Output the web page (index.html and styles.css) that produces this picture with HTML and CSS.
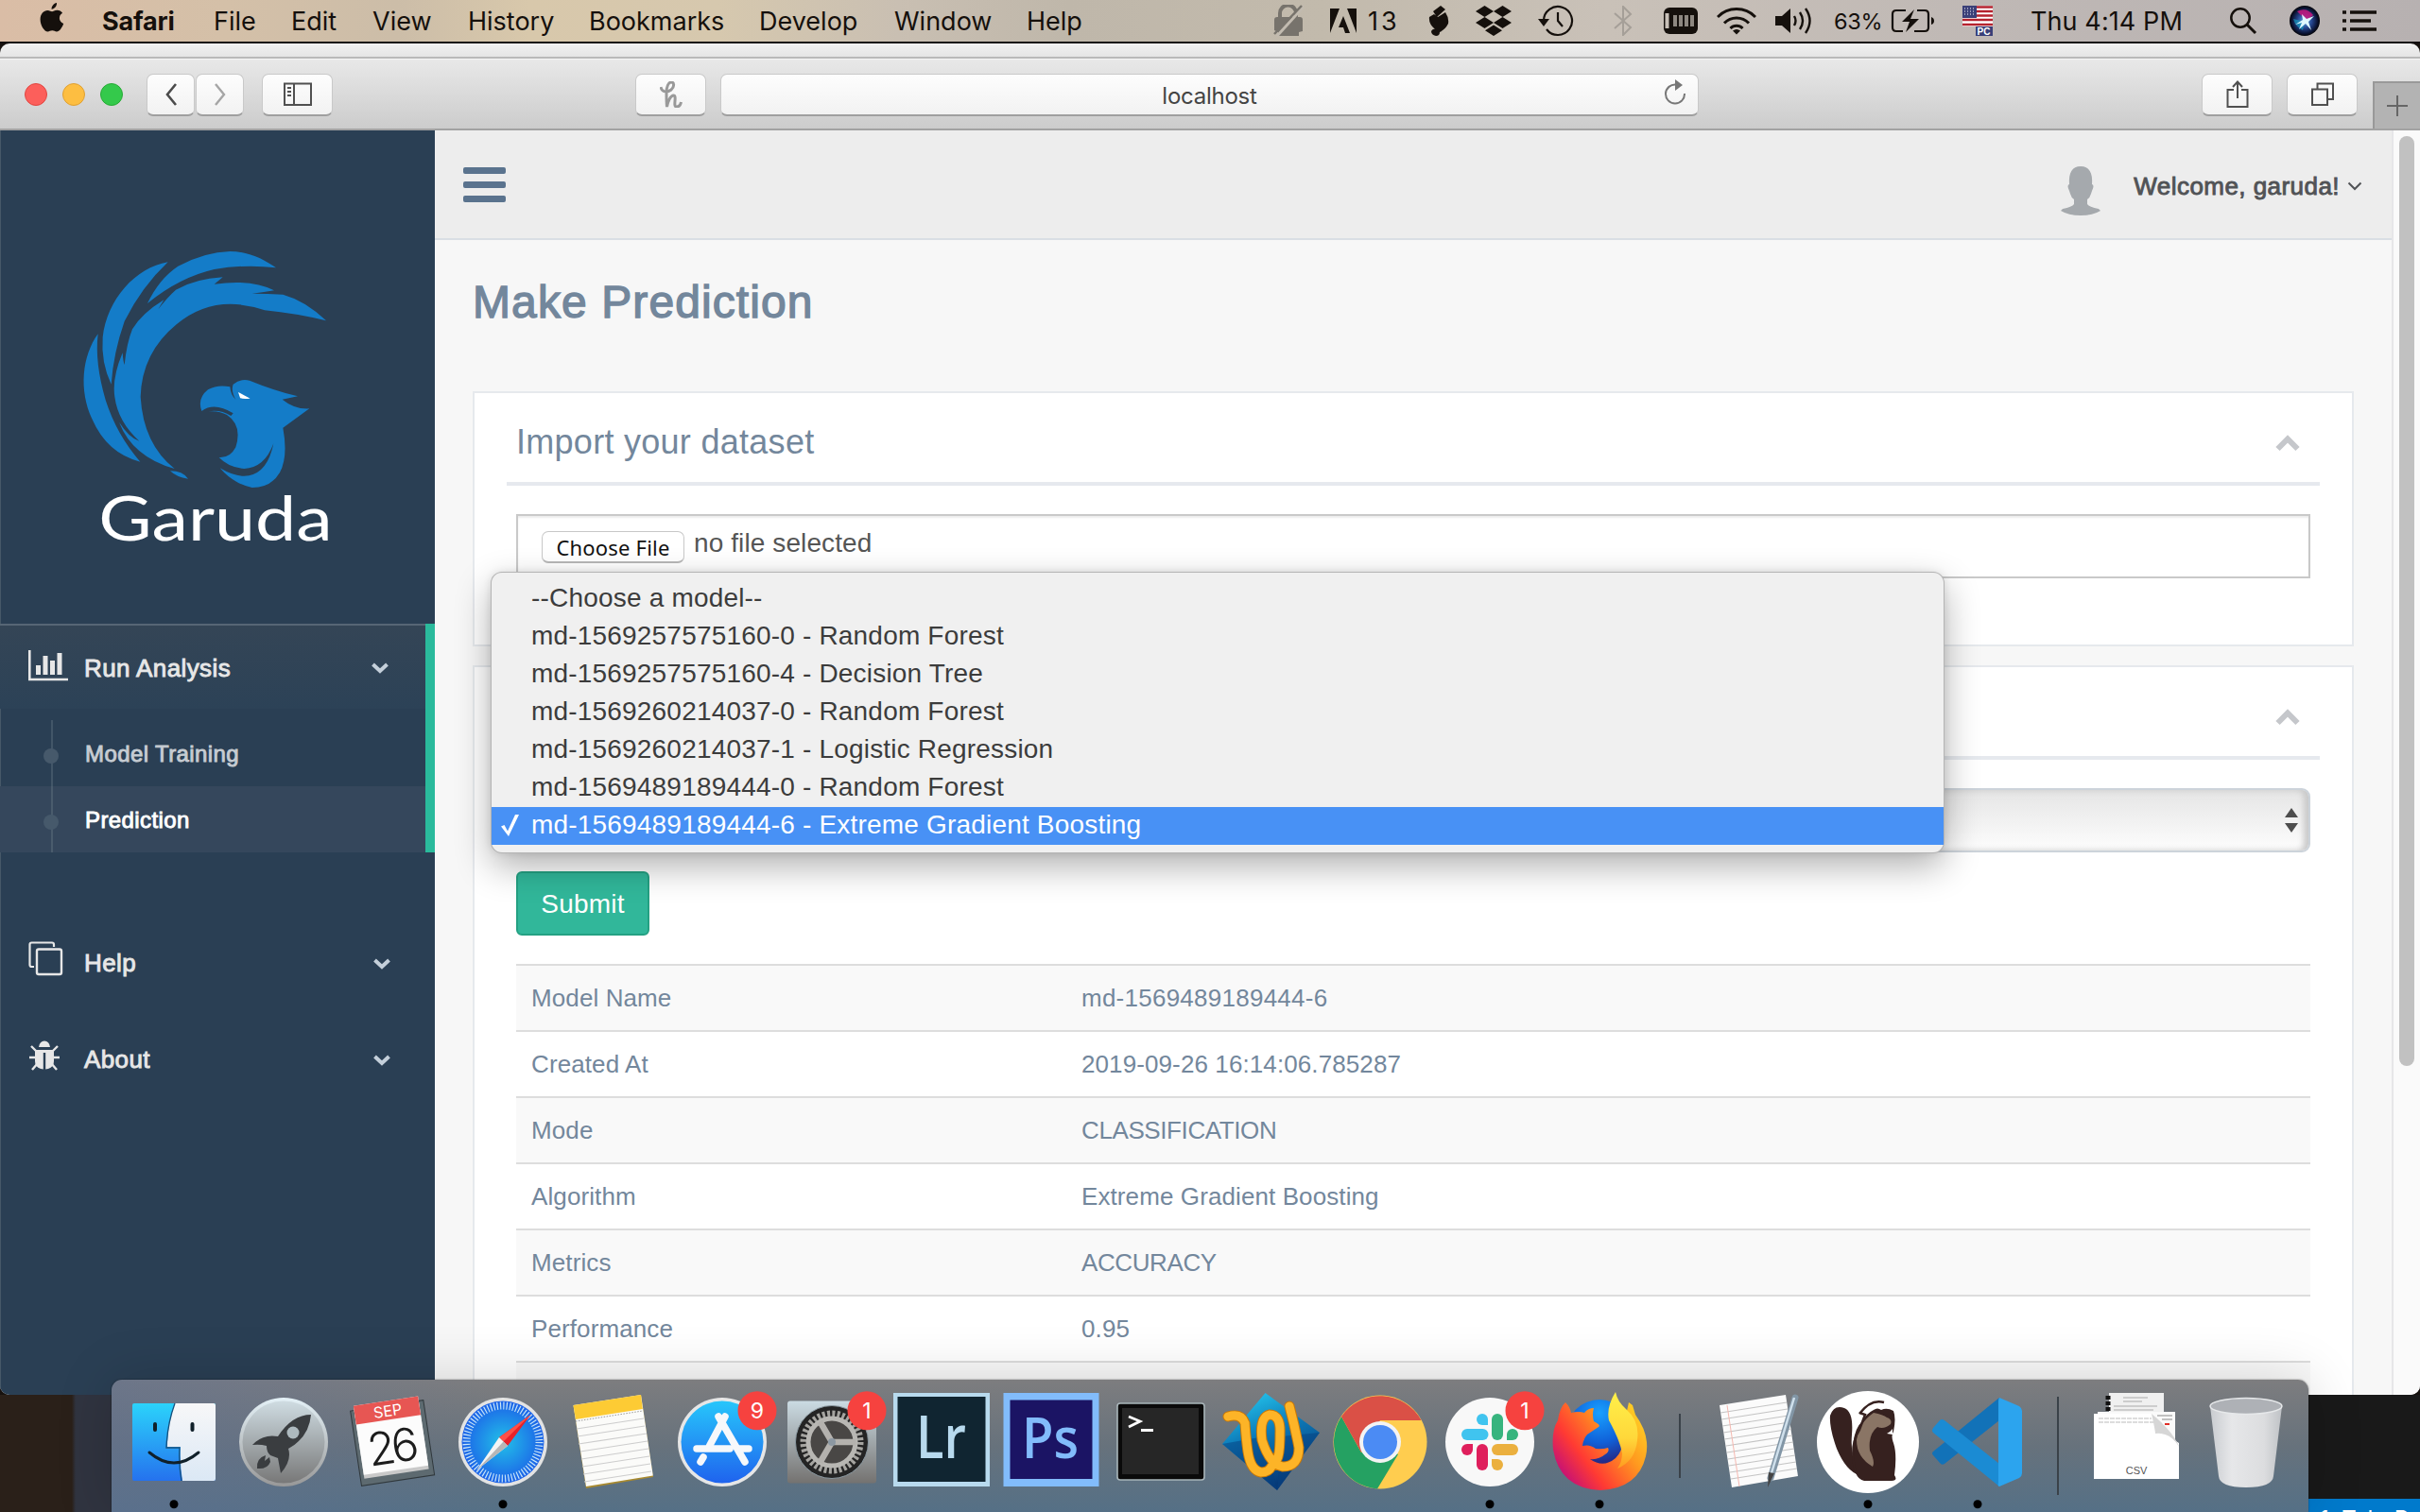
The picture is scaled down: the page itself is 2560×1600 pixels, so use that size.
FILE: index.html
```
<!DOCTYPE html>
<html lang="en">
<head>
<meta charset="utf-8">
<title>Garuda - Make Prediction</title>
<link rel="stylesheet" href="styles.css">
</head>
<body>
<div class="desktop">
<header class="menubar">
  <nav class="app-menu">
    <svg class="apple" viewBox="0 0 26 32"><path d="M18 0c.4 3-2.200 6.600-5.400 6.800C12.200 3.800 15 .5 18 0zM13 9.200c1.200 0 2.900-1.500 5.500-1.500 2.300 0 4.300 1.100 5.600 3-4.700 2.700-4 9.300 1.100 11.300-1.600 4.400-4.400 8.500-7.200 8.500-1.900 0-2.500-1.200-4.700-1.200-2.300 0-3 1.200-4.800 1.200C5 30.500.6 24 .6 17.500c0-6 3.800-9.600 7.700-9.600 2.300 0 3.700 1.300 4.700 1.300z"/></svg>
    <b>Safari</b><span>File</span><span>Edit</span><span>View</span><span>History</span><span>Bookmarks</span><span>Develop</span><span>Window</span><span>Help</span>
  </nav>
  <div class="status">
    <svg class="st-lock" viewBox="0 0 32 34"><path d="M7 15V9a8.500 8.500 0 0 1 17 0v6" fill="none" stroke="#77736c" stroke-width="4"/><path d="M1 16q0-3 3-3h24q3 0 3 3v12l-4 1v4H5v-4l-4-2z" fill="#77736c"/><path d="M4 33L33 1" stroke="#c2bbb0" stroke-width="3"/><path d="M1 31L30 1" stroke="#77736c" stroke-width="2.500"/></svg>
    <svg class="st-a" viewBox="0 0 28 26"><path d="M0 0h10L0 26zM18 0h10v26zM14 8l7 18h-5l-2-6H9z"/></svg>
    <span class="st-13">13</span>
    <svg class="st-s" viewBox="0 0 22 32"><path d="M5 6l8-6 5 4-9 8zM1 12l5-3 4 3 8-5q4 6 3 12-3 6-9 9 0 4-4 4-5-1-5-5 2-3 4-2Q0 19 1 12z"/></svg>
    <svg class="st-db" viewBox="0 0 38 32"><path d="M9.500 0L19 6l-9.500 6L0 6zM28.500 0L38 6l-9.500 6L19 6zM9.500 12L19 18l-9.500 6L0 18zM28.500 12L38 18l-9.500 6L19 18zM19 20.500l9 5.700-9 5.800-9-5.800z"/></svg>
    <svg class="st-tm" viewBox="0 0 38 34"><path d="M6 17A15 15 0 1 1 9 26M21 8v9l5 6" fill="none" stroke="#15100c" stroke-width="2.200"/><path d="M0 15h12l-6 8z"/></svg>
    <svg class="st-bt" viewBox="0 0 20 32"><path d="M1 8l17 15-8 8V1l8 8L1 24" fill="none" stroke="#a59f98" stroke-width="2"/></svg>
    <svg class="st-mem" viewBox="0 0 36 28"><rect width="36" height="28" rx="6"/><path d="M3.500 6v16" stroke="#c8c0b8" stroke-width="4"/><path d="M12 8v12M18 8v12M24 8v12M30 8v12" stroke="#8d8780" stroke-width="4"/></svg>
    <svg class="st-wifi" viewBox="0 0 42 30"><path d="M1 11a28 28 0 0 1 40 0M8 17.500a18 18 0 0 1 26 0M14.500 23a9 9 0 0 1 13 0" fill="none" stroke="#15100c" stroke-width="3"/><path d="M17 25.500q4-3 8 0l-4 4z"/></svg>
    <svg class="st-vol" viewBox="0 0 42 32"><path d="M0 11h7l9-8v26l-9-8H0z"/><path d="M20 11q3 5 0 10M26 7q6 9 0 18M32 3q9 13 0 26" fill="none" stroke="#15100c" stroke-width="2.400"/></svg>
    <span class="st-pct">63%</span>
    <svg class="st-batt" viewBox="0 0 46 26"><path d="M16 2H6Q2 2 2 6v14q0 4 4 4h7M28 2h8q4 0 4 4v14q0 4-4 4H25" fill="none" stroke="#15100c" stroke-width="2.200"/><path d="M43 9q3 1 3 4t-3 4zM25 1L12 14h8l-4 11 14-14h-9z"/></svg>
    <svg class="st-flag" viewBox="0 0 32 32"><path fill="#fff" d="M0 0h32v22H0z"/><path d="M0 1.500h32M0 6h32M0 10.500h32M0 15h32M0 20h32" stroke="#b5232f" stroke-width="2.400"/><path fill="#3a3f78" d="M0 0h15v13H0zM14 22h18v10H14z"/><path d="M2 3h12M2 6h12M2 9h12" stroke="#fff" stroke-dasharray="1 2"/><text x="15.500" y="31" font-size="10" font-weight="700" fill="#fff" font-family="Liberation Sans, sans-serif">PC</text></svg>
    <span class="st-time">Thu 4:14 PM</span>
    <svg class="st-search" viewBox="0 0 30 30"><circle cx="12" cy="12" r="9.700" fill="none" stroke="#15100c" stroke-width="2.500"/><path d="M19 19l9 9" stroke="#15100c" stroke-width="3"/></svg>
    <svg class="st-siri" viewBox="0 0 32 32"><defs><radialGradient id="siri"><stop offset="0" stop-color="#5fa8e8"/><stop offset=".5" stop-color="#23428a"/><stop offset=".85" stop-color="#0a1230"/><stop offset="1" stop-color="#050508"/></radialGradient></defs><circle cx="16" cy="16" r="16" fill="url(#siri)"/><path d="M8 6q10-5 17 4l-7 6z" fill="#c8187e" opacity=".85"/><path d="M4 14q2 8 10 12l2-9z" fill="#18a8c8" opacity=".6"/><path d="M6 20l8-5-1-6 5 5 8-3-6 6 3 9-6-7-7 6 3-7z" fill="#dff8ff"/></svg>
    <svg class="st-list" viewBox="0 0 36 22"><path d="M0 2h4M0 11h4M0 20h4M8 2h28M8 11h22M8 20h28" stroke="#15100c" stroke-width="3.600"/></svg>
  </div>
</header>
<div class="back-window"></div>
<main class="window">
  <div class="toolbar">
    <i class="light red"></i><i class="light yellow"></i><i class="light green"></i>
    <span class="tbtn back"><svg viewBox="0 0 14 26" width="14" height="26"><path d="M12 2L3 13l9 11" fill="none" stroke="#4b4b4b" stroke-width="2.600"/></svg></span>
    <span class="tbtn fwd"><svg viewBox="0 0 14 26" width="14" height="26"><path d="M2 2l9 11-9 11" fill="none" stroke="#a5a5a5" stroke-width="2.400"/></svg></span>
    <span class="tbtn side"><svg viewBox="0 0 32 26" width="32" height="26"><path d="M2 1.500h28v22.500H2zM12 1v23M5 6h4M5 10h4M5 14h4" fill="none" stroke="#505050" stroke-width="2"/></svg></span>
    <span class="tbtn honey"><svg viewBox="0 0 24 28" width="24" height="28"><path d="M1 6c1 6 7 6 11 3 4-4 3-8 0-8S7 6 7 12c0 6 0 10 .5 15 1-6 4-12 7-12 4 0-1 12 3 12q4 0 5-5" fill="none" stroke="#999" stroke-width="3"/></svg></span>
    <span class="tbtn url"><span>localhost</span><svg viewBox="0 0 24 28" width="24" height="28"><path d="M13 5.500A10 10 0 1 0 22 15" fill="none" stroke="#777" stroke-width="2"/><path d="M12 0l8 6-8 6z" fill="#777"/></svg></span>
    <span class="tbtn share"><svg viewBox="0 0 24 32" width="24" height="32"><path d="M8 11H1.500v18h21V11H16M12 20V3M7 8l5-5.500L17 8" fill="none" stroke="#505050" stroke-width="2"/></svg></span>
    <span class="tbtn tabs"><svg viewBox="0 0 26 26" width="26" height="26"><path d="M2 7.500h16V24H2zM7.500 7V1.500H24V18h-5" fill="none" stroke="#505050" stroke-width="2"/></svg></span>
    <span class="newtab"><svg viewBox="0 0 22 22" width="22" height="22"><path d="M11 0v22M0 11h22" stroke="#666" stroke-width="2"/></svg></span>
  </div>
  <div class="page">
    <aside class="sidebar">
      <svg class="logo" viewBox="0 0 960 1080">
        <g fill="#147cc8">
          <path d="M696 130C660 105 610 78 550 78Q470 80 385 125Q325 165 288 243Q390 160 500 135Q600 118 696 130z"/>
          <path d="M353 112C250 130 160 230 146 350Q140 430 173 500Q180 400 215 300Q270 190 353 112z"/>
          <path d="M131 340C80 410 70 520 112 610Q160 720 265 746Q190 660 155 550Q120 430 131 340z"/>
          <path d="M855 298Q790 235 718 215Q670 212 620 212Q660 208 690 202Q620 165 500 182L527 160Q440 165 378 200Q350 225 322 262L340 232Q270 275 240 325Q222 370 215 438Q211 430 209 400Q175 480 184 540Q195 620 262 680Q230 670 198 620Q240 730 374 768Q275 690 266 540Q270 400 380 310Q500 210 660 265Q760 275 855 298z"/>
          <path d="M360 775Q400 775 417 800Q380 795 360 775z"/>
          <path fill-rule="evenodd" d="M460 585Q445 545 480 517Q510 500 550 508Q552 535 568 548Q552 520 560 500Q585 480 612 488Q690 520 765 538L716 548Q755 580 802 577L718 638Q735 730 708 780Q680 828 620 828Q560 815 518 766Q570 797 610 790Q670 778 688 688Q660 765 595 768Q545 764 515 732Q550 735 568 700Q590 630 540 597Q515 583 483 586Q520 580 553 600L560 592Q500 555 460 585z"/>
        </g>
        <path d="M576 525L614 545Q590 548 582 543z" fill="#fff"/>
        <text x="133" y="995" textLength="742" lengthAdjust="spacingAndGlyphs" font-family="Lato, sans-serif" font-size="200" fill="#fff">Garuda</text>
      </svg>
      <nav class="side-menu">
        <section class="active">
          <div class="item">
            <svg class="icon" viewBox="0 0 42 34"><path d="M1.300 1v31H42" fill="none" stroke="#e7e7e7" stroke-width="2.600"/><path d="M8 17h5v10H8zM15.500 7h5v20h-5zM23 12h5v15h-5zM30.500 4h5v23h-5z" fill="#e7e7e7"/></svg>
            <span>Run Analysis</span>
            <svg class="chev" viewBox="0 0 18 12"><path d="M1.500 2L9 9l7.500-7" fill="none" stroke="#c4cfda" stroke-width="4"/></svg>
          </div>
          <ul>
            <li>Model Training</li>
            <li class="current">Prediction</li>
          </ul>
        </section>
        <div class="item help">
          <svg class="icon" viewBox="0 0 42 40"><path d="M27 6V3.500Q27 1.500 25 1.500H3.500Q1.500 1.500 1.500 3.500V25q0 2 2 2H6" fill="none" stroke="#e7e7e7" stroke-width="2.200"/><rect x="9" y="8.500" width="26" height="26.500" rx="2" fill="none" stroke="#e7e7e7" stroke-width="2.400"/></svg>
          <span>Help</span>
          <svg class="chev" viewBox="0 0 18 12"><path d="M1.500 2L9 9l7.500-7" fill="none" stroke="#c4cfda" stroke-width="4"/></svg>
        </div>
        <div class="item about">
          <svg class="icon" viewBox="0 0 42 34"><path d="M11 7q1-6.500 6-6.500T23 7zM7 10h20v12q0 6-6 8l-3 .5V14h-2v16.500L13 30q-6-2-6-8z" fill="#e7e7e7"/><path d="M3 6l6 6M31 6l-6 6M1 18h32M4 31l6-7M30 31l-6-7" stroke="#e7e7e7" stroke-width="2.400"/><path d="M17 13v18" stroke="#2a3f54" stroke-width="2.400"/></svg>
          <span>About</span>
          <svg class="chev" viewBox="0 0 18 12"><path d="M1.500 2L9 9l7.500-7" fill="none" stroke="#c4cfda" stroke-width="4"/></svg>
        </div>
      </nav>
    </aside>
    <div class="content">
      <div class="topnav">
        <div class="burger"><i></i><i></i><i></i></div>
        <div class="user">
          <svg class="avatar" viewBox="0 0 42 52" width="42" height="52"><path d="M21 0C12 0 8 7 9 19q-3 1 0 7l1 3q1 4 4 6v5q-2 3-12 5l-2 2q8 5 21 5t21-5l-2-2q-10-2-12-5v-5q3-2 4-6l1-3q3-6 0-7C34 7 30 0 21 0z" fill="#a5a9ad"/></svg>
          <span>Welcome, garuda!</span>
          <svg viewBox="0 0 16 10" width="16" height="10"><path d="M1.500 1.500L8 8l6.500-6.500" fill="none" stroke="#515356" stroke-width="2"/></svg>
        </div>
      </div>
      <div class="body">
        <h1>Make Prediction</h1>
        <section class="panel import">
          <h2>Import your dataset<svg viewBox="0 0 26 18" width="26" height="18"><path d="M2.500 15L13 4.500 23.500 15" fill="none" stroke="#c5c7cb" stroke-width="6"/></svg></h2>
          <div class="file"><button>Choose File</button><span>no file selected</span></div>
        </section>
        <section class="panel model">
          <h2>&nbsp;<svg viewBox="0 0 26 18" width="26" height="18"><path d="M2.500 15L13 4.500 23.500 15" fill="none" stroke="#c5c7cb" stroke-width="6"/></svg></h2>
          <div class="select"><svg viewBox="0 0 14 26" width="14" height="26"><path d="M7 0l7 10H0zM7 26l7-10H0z" fill="#4d4d4d"/></svg></div>
          <button class="submit">Submit</button>
          <table>
            <tr><td>Model Name</td><td class="id">md-1569489189444-6</td></tr>
            <tr><td>Created At</td><td>2019-09-26 16:14:06.785287</td></tr>
            <tr><td>Mode</td><td class="caps">CLASSIFICATION</td></tr>
            <tr><td>Algorithm</td><td>Extreme Gradient Boosting</td></tr>
            <tr><td>Metrics</td><td class="caps">ACCURACY</td></tr>
            <tr><td>Performance</td><td>0.95</td></tr>
            <tr><td></td><td></td></tr>
          </table>
        </section>
      </div>
    </div>
    <div class="scroll"><i></i></div>
  </div>
</main>
<div class="under"><div class="wood"></div><div class="editor"><div class="editor-bar">1&nbsp; Tab&nbsp; Pack</div></div></div>
</div>

<ul class="popup">
  <li>--Choose a model--</li>
  <li>md-1569257575160-0 - Random Forest</li>
  <li>md-1569257575160-4 - Decision Tree</li>
  <li>md-1569260214037-0 - Random Forest</li>
  <li>md-1569260214037-1 - Logistic Regression</li>
  <li>md-1569489189444-0 - Random Forest</li>
  <li class="on"><svg viewBox="0 0 20 24" width="20" height="24"><path d="M0 12.500l3.500-1.500 3.500 6.500L15 0h4L8 23z" fill="#fff"/></svg>md-1569489189444-6 - Extreme Gradient Boosting</li>
</ul>

<svg class="defs" width="0" height="0"><defs>
  <linearGradient id="finder" x2="0" y2="1"><stop offset="0" stop-color="#2bd3fb"/><stop offset="1" stop-color="#2572ee"/></linearGradient>
  <linearGradient id="face" x2="0" y2="1"><stop offset="0" stop-color="#f7f7f8"/><stop offset="1" stop-color="#dbe8f5"/></linearGradient>
  <linearGradient id="launch" x2="0" y2="1"><stop offset="0" stop-color="#cfdce2"/><stop offset="1" stop-color="#787878"/></linearGradient>
  <linearGradient id="ring" x2="0" y2="1"><stop offset="0" stop-color="#e4f1f7"/><stop offset="1" stop-color="#989898"/></linearGradient>
  <radialGradient id="safari"><stop offset="0" stop-color="#22c0e8"/><stop offset="1" stop-color="#1c62e8"/></radialGradient>
  <linearGradient id="store" x2="0" y2="1"><stop offset="0" stop-color="#27c6fb"/><stop offset="1" stop-color="#1f63ee"/></linearGradient>
  <linearGradient id="prefs" x2="0" y2="1"><stop offset="0" stop-color="#cbdbe3"/><stop offset="1" stop-color="#747270"/></linearGradient>
  <linearGradient id="gem" x2=".4" y2="1"><stop offset="0" stop-color="#29d5f8"/><stop offset=".5" stop-color="#0d7ab8"/><stop offset="1" stop-color="#063a78"/></linearGradient>
  <radialGradient id="globe" cx=".5" cy=".2" r=".9"><stop offset="0" stop-color="#18a0ff"/><stop offset=".5" stop-color="#1060d8"/><stop offset="1" stop-color="#301060"/></radialGradient>
  <linearGradient id="fox" x1="1" y1="0" x2="0" y2=".7"><stop offset="0" stop-color="#ffe226"/><stop offset=".4" stop-color="#ff9a1f"/><stop offset=".75" stop-color="#ff3a33"/><stop offset="1" stop-color="#c41078"/></linearGradient>
  <linearGradient id="flame" x2="0" y2="1"><stop offset="0" stop-color="#fff04a"/><stop offset=".6" stop-color="#ffd83a"/><stop offset="1" stop-color="#ff9a1f"/></linearGradient>
  <linearGradient id="trash"><stop offset="0" stop-color="#c9ccd0"/><stop offset=".3" stop-color="#e6e7e9"/><stop offset=".75" stop-color="#dcdddf"/><stop offset="1" stop-color="#bfc2c6"/></linearGradient>
</defs></svg>

<footer class="dock">
  <svg viewBox="0 0 116 140"><rect x="14" y="25" width="88" height="82" rx="2" fill="url(#finder)"/><path d="M59 25q-8 22-8 46h14q-1 18 2 36h33q2 0 2-2V27q0-2-2-2z" fill="url(#face)"/><path d="M59 25q-8 22-9 47h14q-1 18 2 35" fill="none" stroke="#16507c" stroke-width="1.300"/><path d="M38 47v6M77.500 47v6" stroke="#10202a" stroke-width="4" stroke-linecap="round"/><path d="M32 77q26 22 52 0" fill="none" stroke="#10202a" stroke-width="3" stroke-linecap="round"/><circle cx="58" cy="131.700" r="4.500"/></svg>
  <svg viewBox="0 0 116 140"><circle cx="58" cy="66" r="47" fill="url(#ring)"/><circle cx="58" cy="66" r="43.500" fill="url(#launch)"/><path d="M87 37q-20 0-35 23-16-3-27 9 8-1 15 1 0 7 4 10l8 3 3 16q12-14 8-26 22-12 24-36z" fill="#3a3d40"/><circle cx="68" cy="56" r="6.500" fill="#aebabf"/><path d="M39 80q-10 3-9 14 11 1 14-7l-1-5-5 4z" fill="#3a3d40"/></svg>
  <svg viewBox="0 0 116 140"><g transform="rotate(-8.500 57 66)"><rect x="18" y="27" width="78" height="80" fill="#5d6a70" stroke="#30383c"/><path d="M22 26h69v74H22z" fill="#c9c9c9"/><path d="M22 22h69v74H22z" fill="#fcfcfc"/><path d="M22 22h69v20H22z" fill="#e75653"/><text x="57" y="38.500" text-anchor="middle" font-family="Inter, sans-serif" font-size="16" fill="#fff">SEP</text><text x="57" y="88" text-anchor="middle" font-family="Inter, sans-serif" font-weight="300" font-size="48" textLength="54" fill="#1c1c1c">26</text></g></svg>
  <svg viewBox="0 0 116 140"><circle cx="58" cy="66" r="47" fill="#e3e3e3"/><circle cx="58" cy="66" r="43.500" fill="url(#safari)"/><circle cx="58" cy="66" r="38.500" fill="none" stroke="#c8e4f8" stroke-width="8" stroke-dasharray="1.200 2.160"/><path d="M87.500 37L63 70 54 61z" fill="#e8222a"/><path d="M87.500 37L54 61l4.500 4.500z" fill="#ff5048"/><path d="M30 96l24-35 9 9z" fill="#f4f4f4"/><path d="M30 96l28.500-30.500L63 70z" fill="#b6b6b6"/><circle cx="58" cy="131.700" r="4.500"/></svg>
  <svg viewBox="0 0 116 140"><path d="M16.500 28L88 16l13 87-71 12z" fill="#a88a30"/><path d="M16.500 27L88 16l12.800 85.500L30 113z" fill="#fbfbf9"/><path d="M16.500 27L88 16l1.800 15L19 42z" fill="#fdcb34"/><path d="M19 44l71-11" stroke="#999" stroke-dasharray="1.500 1.500"/><path d="M20 52l71-11M21 60l71-11M22 68l72-11M24 76l71-11M25 84l71-11M26 92l71-11M27 100l71-11M28 108l71-11" stroke="#cdcdcd" stroke-width="1.200"/></svg>
  <svg viewBox="0 0 116 140"><circle cx="58" cy="66" r="47" fill="#e6e6e6"/><circle cx="58" cy="66" r="43.500" fill="url(#store)"/><path d="M61 39L44 71M54 39l28 48M31 73h35M76 73h10M38 82l-3 5" stroke="#f6f8fb" stroke-width="7.500" stroke-linecap="round"/><g class="badge"><circle cx="95" cy="32.700" r="20.500"/><text x="95" y="40.500">9</text></g></svg>
  <svg viewBox="0 0 116 140"><rect x="11" y="22.500" width="94" height="87" rx="3" fill="url(#prefs)"/><circle cx="58" cy="66" r="38.500" fill="#242424" stroke="#8a98a0"/><circle cx="58" cy="66" r="30" fill="none" stroke="#a5a4a0" stroke-width="7" stroke-dasharray="3 2.240"/><circle cx="58" cy="66" r="25" fill="#494745" stroke="#b8b7b3" stroke-width="5"/><path d="M58 66h25M58 66L45.500 44.500M58 66L45.500 87.500" stroke="#b4b2ae" stroke-width="6.500"/><circle cx="58" cy="66" r="4" fill="#8c98a2"/><g class="badge"><circle cx="95" cy="32.700" r="20.500"/><text x="95" y="40.500">1</text></g></svg>
  <svg viewBox="0 0 116 140"><path d="M7 14h102v99H7z" fill="#b8daee"/><path d="M11.500 18h93v90h-93z" fill="#102531"/><text x="31" y="83" font-family="Open Sans, sans-serif" font-weight="600" font-size="64" textLength="53" lengthAdjust="spacingAndGlyphs" fill="#b8daee">Lr</text></svg>
  <svg viewBox="0 0 116 140"><path d="M7.500 14h101v99h-101z" fill="#82bcfb"/><path d="M14.500 21.500h87v83.500h-87z" fill="#1b1464"/><text x="27" y="83" font-family="Open Sans, sans-serif" font-weight="600" font-size="60" textLength="60" lengthAdjust="spacingAndGlyphs" fill="#82bcfb">Ps</text></svg>
  <svg viewBox="0 0 116 140"><rect x="12" y="25" width="92" height="81" rx="3" fill="#0a0a0a" stroke="#a9b6ba" stroke-width="1.600"/><path d="M17 30h81v70H17z" fill="#262626"/><path d="M24 39l12 5-12 6M37 53.500h13" fill="none" stroke="#fff" stroke-width="2.800"/></svg>
  <svg viewBox="0 0 116 140"><path d="M52.500 14L110 56 65 117 7 68z" fill="url(#gem)"/><path d="M52 60L7 68l58 49zM70 60l40-4-45 61z" fill="#063f80" opacity=".5"/><g fill="none" stroke-linecap="round"><path d="M13 39q14-4 18 7 1 16 3 30 3 20 14 22 8 0 11-6M78 28q6 22 10 44 0 20-17 20-14-2-22-28-3-24 8-27 12 0 11 20 0 22-3 27" stroke="#c97806" stroke-width="11"/><path d="M13 39q14-4 18 7 1 16 3 30 3 20 14 22 8 0 11-6M78 28q6 22 10 44 0 20-17 20-14-2-22-28-3-24 8-27 12 0 11 20 0 22-3 27" stroke="#fdb427" stroke-width="9"/></g></svg>
  <svg viewBox="0 0 116 140"><circle cx="58" cy="66" r="49.500" fill="#ffcd4f"/><path d="M58 66l19 13-22 36.400A49.500 49.500 0 0 1 17 39l21 38z" fill="#25a162"/><path d="M17 39A49.500 49.500 0 0 1 101.500 43H58L38 77z" fill="#da5046"/><circle cx="58" cy="66" r="22" fill="#f3f3f3"/><circle cx="58" cy="66" r="18" fill="#4b8bf4"/></svg>
  <svg viewBox="0 0 116 140"><circle cx="58" cy="66" r="47" fill="#f8f8f8"/><g stroke-width="12" stroke-linecap="round"><path d="M34 58h16.500" stroke="#40c4ef"/><path d="M66 42v16" stroke="#37b47e"/><path d="M50 74v16" stroke="#df1f5c"/><path d="M66 74h16" stroke="#ebb03f"/></g><path d="M56 48V42a6 6 0 1 0-6 6z" fill="#40c4ef"/><path d="M76 64V58a6 6 0 1 1 6 6z" fill="#37b47e"/><path d="M40 68v6a6 6 0 1 1-6-6z" fill="#df1f5c"/><path d="M60 84h6a6 6 0 1 1-6 6z" fill="#ebb03f"/><g class="badge"><circle cx="95" cy="32.700" r="20.500"/><text x="95" y="40.500">1</text></g><circle cx="58" cy="131.700" r="4.500"/></svg>
  <svg viewBox="0 0 116 140"><circle cx="58" cy="56" r="35" fill="url(#globe)"/><path d="M22 24q5 5 6 11 8-2 14 0 4-5 10-5-2 7 0 14 8 4 5 6l-12 8q-4 4-5 12 8-2 14 3 7 1 13-1 2 4-3 7-7 6-16 5 14 10 27-1 10-9 8-32L89 24l4 3 3 10q16 22 11 44-8 34-48 36Q16 115 9 74q-2-20 5-31 2-14 8-19z" fill="url(#fox)"/><path d="M75 13q-10 16-7 30 12 22 14 35 0 9-5 16 19-8 21-30 3-20-12-33-9-8-11-18z" fill="url(#flame)"/><circle cx="58" cy="131.700" r="4.500"/></svg>
  <i class="sep"></i>
  <svg viewBox="0 0 116 140"><path d="M17 27L87 16l13 86-70 12z" fill="#fbfbfb"/><path d="M18 35l70-11M19 42l70-11M20 49l70-11M21 56l70-11M22 63l71-11M24 70l70-11M25 77l70-11M26 84l70-11M27 91l70-11M28 98l70-11M29 105l70-11" stroke="#c4c4c4" stroke-width="1.200"/><path d="M25 27l13 86" stroke="#f5b8b0"/><path d="M97 19L71 104" stroke="#8296a6" stroke-width="7" stroke-linecap="round"/><path d="M96 19L71 102" stroke="#cfe0ec" stroke-width="2.500"/><path d="M75 99l-7 15 1-16z" fill="#444"/></svg>
  <svg viewBox="0 0 116 140"><circle cx="58" cy="66" r="54" fill="#fff"/><path d="M18 38q4-12 15-8 10 4 8 28-2 26 8 43-14-4-24-28-8-22-7-35z" fill="#36211f"/><path d="M64 32q4-3 8 0 6-3 13 1 3 8 0 22-3 4 0 12 4 12 1 34 4 6-3 6H54q-12-2-12-30 0-24 10-33 4-8 12-12z" fill="#36211f"/><path d="M64 35q10 2 14 5 6 2 4 7-7 6-14 3-10 8-8 25 6 12 3 17Q46 82 46 64q2-18 18-29z" fill="#8a7565"/><path d="M49 36q12-16 26-12M49 35l6 2-6 16q-10 14-5 42" fill="none" stroke="#36211f" stroke-width="2.500"/><path d="M78 57q4-2 6-5v6z" fill="#fff"/><circle cx="58" cy="131.700" r="4.500"/></svg>
  <svg viewBox="0 0 116 140"><path d="M81 19v24L23 89q-3 2-5-1l-7-8q-2-2 0-4z" fill="#1272b8"/><path d="M81 113V89L23 43q-3-2-5 0l-7 8q-2 3 0 5z" fill="#1b8bd3"/><path d="M81 19l21 9q3 2 3 5v66q0 3-3 5l-21 9q-2 0-1-4V23q0-3 1-4z" fill="#2ca4ee"/><circle cx="58" cy="131.700" r="4.500"/></svg>
  <i class="sep tall"></i>
  <svg viewBox="0 0 116 140"><path d="M29 14h58v25H29z" fill="#f0f0f0"/><path d="M28 17v18" stroke="#111" stroke-width="5" stroke-dasharray="4 2"/><path d="M44 19h26M44 23h20M34 28h46M34 32h42" stroke="#aaa"/><path d="M17 34h82v30H17z" fill="#fafafa"/><path d="M13 36h61q6 17 29 31v38H13z" fill="#fff"/><path d="M18 41h56M18 45h58" stroke="#bbb" stroke-dasharray="5 1"/><path d="M74 36q4 18 4 21 16-2 25 14Q98 56 74 36z" fill="#d6d6d6"/><path d="M80 38h16M85 42h11" stroke="#888"/><path d="M88 47h5" stroke="#e03028" stroke-width="2"/><text x="58" y="100" text-anchor="middle" font-family="Liberation Sans, sans-serif" font-size="11" fill="#555">CSV</text></svg>
  <svg viewBox="0 0 116 140"><path d="M20 28l9 74q1 12 29 12t29-12l9-74z" fill="url(#trash)"/><ellipse cx="58" cy="28" rx="38" ry="8.500" fill="#aeb1b6" stroke="#e6e8ea" stroke-width="1.500"/></svg>
</footer>
</body>
</html>
```
FILE: styles.css
```
* { box-sizing: border-box; }
html, body { margin: 0; width: 2560px; height: 1600px; overflow: hidden; }
body { position: relative; font-family: "Liberation Sans", Arial, sans-serif; background: #17120f; }
ul { list-style: none; margin: 0; padding: 0; }
svg { flex: none; display: block; }
i { display: block; flex: none; }
.defs { position: absolute; }
.desktop { display: flex; flex-direction: column; height: 1600px; }

/* menu bar */
.menubar {
  height: 46px; flex: none; display: flex; align-items: center; justify-content: space-between;
  border-bottom: 2px solid #100c0c; padding-right: 46px;
  background: linear-gradient(90deg, #dabda6 0, #d4c0a8 240px, #ccbda8 420px, #d8c8ab 560px, #d6c8ae 760px, #c9bfb2 950px, #bfb7aa 1130px, #c2baac 1400px, #c9c1b8 1700px, #bfb8b5 2100px, #b7b1b1 2560px);
  font: 27px Inter, sans-serif; color: #15100c; letter-spacing: 0;
}
.menubar svg { fill: #15100c; }
.app-menu { display: grid; grid-template-columns: 66px 118px 82px 86px 101px 128px 180px 143px 140px 80px; padding-left: 42px; align-items: center; white-space: nowrap; }
.app-menu b { letter-spacing: -.2px; }
.apple { width: 26px; height: 32px; margin-bottom: 6px; }
.status { display: flex; align-items: center; white-space: nowrap; }
.st-lock { width: 32px; } .st-a { width: 28px; margin-left: 28px; }
.st-13 { width: 34px; margin-left: 12px; letter-spacing: 3px; } .st-s { width: 22px; margin-left: 30px; }
.st-db { width: 38px; margin-left: 28px; } .st-tm { width: 38px; margin-left: 28px; }
.st-bt { width: 20px; margin-left: 42px; } .st-mem { width: 36px; margin-left: 33px; }
.st-wifi { width: 42px; margin-left: 20px; } .st-vol { width: 42px; margin-left: 20px; }
.st-pct { width: 52px; margin-left: 20px; font-size: 23.5px; letter-spacing: -.3px; } .st-batt { width: 46px; margin-left: 8px; }
.st-flag { width: 32px; margin-left: 30px; } .st-time { width: 170px; margin-left: 40px; letter-spacing: .1px; }
.st-search { width: 30px; margin-left: 40px; } .st-siri { width: 32px; margin-left: 34px; } .st-list { width: 36px; margin-left: 24px; }

/* browser window */
.back-window { height: 16px; flex: none; background: linear-gradient(#f1f1f1, #e5e5e5); border-bottom: 2px solid #b9b9b9; border-radius: 10px 10px 0 0; }
.window { height: 1414px; flex: none; display: flex; flex-direction: column; border-radius: 0 0 10px 10px; overflow: hidden; background: #f7f7f7; }
.toolbar { height: 76px; flex: none; display: flex; align-items: center; padding: 1px 0 0 26px; background: linear-gradient(#e8e8e8, #cccccc); border-bottom: 2px solid #a2a2a2; border-top: 1px solid #f4f4f4; }
.light { width: 24px; height: 24px; border-radius: 50%; margin-right: 16px; }
.red { background: #fc5f5b; border: 1px solid #e14640; }
.yellow { background: #fdbe41; border: 1px solid #dfa032; }
.green { background: #34c94b; border: 1px solid #27ab35; }
.tbtn { height: 45px; flex: none; display: flex; align-items: center; justify-content: center; border-radius: 7px; background: linear-gradient(#fdfdfd, #f2f2f2); border: 1px solid #c9c9c9; border-bottom: 2px solid #9f9f9f; }
.back { width: 51px; margin-left: 9px; }
.fwd { width: 51px; margin-left: 1px; }
.side { width: 75px; margin-left: 19px; }
.honey { width: 75px; margin-left: 320px; }
.url { width: 1035px; margin-left: 15px; font: 24px Inter, sans-serif; color: #444; padding: 3px 12px 0 36px; letter-spacing: -.25px; }
.url span { flex: 1; text-align: center; }
.url svg { margin-top: -6px; }
.share { width: 75px; margin-left: 532px; }
.tabs { width: 75px; margin-left: 15px; }
.newtab { width: 50px; height: 50px; margin-left: auto; align-self: flex-end; background: #b3b3b3; border: 1px solid #999; border-width: 2px 0 0 2px; display: flex; align-items: center; justify-content: center; }

.page { flex: 1; display: flex; min-height: 0; }
.sidebar { width: 460px; flex: none; background: #2a3f54; padding-top: 102px; box-shadow: inset 1px 0 #465868; }
.logo { width: 320px; height: 360px; margin-left: 60px; }
.side-menu { margin-top: 60px; color: #e7e7e7; }
.active { border-right: 10px solid #2aba9c; }
.item { display: flex; align-items: center; padding-left: 30px; font-size: 26px; letter-spacing: .4px; -webkit-text-stroke: .9px currentColor; }
.item .icon { width: 42px; flex: none; }
.item span { margin-left: 17px; flex: 1; }
.chev { width: 18px; height: 12px; margin-top: 2px; }
.active .item { height: 90px; border-top: 2px solid #566675; background: linear-gradient(#344556, #2c4257); padding-right: 39px; }
.active .item .icon { margin-bottom: 5px; }
.active .item span { padding-top: 2px; }
.active li { height: 70px; display: flex; align-items: center; gap: 28px; padding: 1px 0 0 46px; font-size: 24px; letter-spacing: .4px; -webkit-text-stroke: .9px currentColor; color: #c6ccd2; background: linear-gradient(#425668, #425668) 54px 0 / 2px 100% no-repeat; }
.active li::before { content: ""; width: 16px; height: 16px; border-radius: 50%; background: #46596b; margin-top: 4px; }
.active ul { padding-top: 12px; }
.active li.current { color: #fff; background: linear-gradient(#4a5c6d, #4a5c6d) 54px 0 / 2px 100% no-repeat, #35475c; }
.help { height: 102px; margin-top: 66px; padding-right: 47px; }
.help .icon { margin-bottom: 6px; }
.about { height: 102px; padding-right: 47px; }
.about .icon { margin-bottom: 6px; }

.content { width: 2070px; flex: none; }
.topnav { height: 116px; display: flex; justify-content: space-between; background: #ededed; border-bottom: 2px solid #d9dee4; padding: 0 31px 0 30px; }
.burger { display: flex; flex-direction: column; gap: 8px; padding-top: 39px; }
.burger i { width: 45px; height: 7px; border-radius: 2px; background: #5a738e; }
.user { display: flex; align-items: center; font-size: 26px; color: #515356; padding-top: 4px; letter-spacing: .45px; -webkit-text-stroke: .9px currentColor; }
.avatar { margin: 10px 35px 0 0; }
.user span { margin-right: 8px; }
.body { padding: 36px 40px 0; color: #73879c; }
h1 { margin: 0; height: 60px; line-height: 60px; font-size: 48px; font-weight: 400; letter-spacing: 1.1px; -webkit-text-stroke: 1.4px currentColor; }
.panel { background: #fff; border: 2px solid #e6e9ed; padding: 0 34px; }
.panel.import { height: 270px; margin: 64px 0 20px; }
.panel.model { height: 900px; }
h2 { margin: 0; height: 98px; line-height: 84px; padding: 10px 21px 0 10px; border-bottom: 4px solid #e6e9ee; font-size: 36px; font-weight: 400; letter-spacing: .28px; display: flex; justify-content: space-between; }
h2 svg { margin-top: 34px; }
.file { height: 68px; margin: 30px 10px 0; border: 2px solid #c9c9c9; box-shadow: inset 0 2px 2px #ececec; padding: 0 25px; display: flex; font-size: 28px; color: #555; letter-spacing: .1px; }
.file button { width: 151px; height: 34px; margin: 16px 10px 0 0; padding: 0; border: 1px solid #c8c8c8; border-bottom: 2px solid #b8b8b8; border-radius: 7px; background: #fff; font: 22px "Noto Sans", sans-serif; line-height: 30px; color: #111; letter-spacing: .2px; }
.file span { line-height: 58px; }
.select { height: 68px; margin: 30px 10px 0; border: 2px solid #ccd3da; border-radius: 9px; background: linear-gradient(#e5e5e5, #fdfdfd); box-shadow: inset -5px 0 6px #c9c9c9; display: flex; justify-content: flex-end; align-items: center; padding-right: 11px; }
.submit { display: block; width: 141px; height: 68px; margin: 20px 10px 30px; border: 2px solid #24a183; border-radius: 6px; background: #31b79a; color: #fff; font: 28px "Liberation Sans", sans-serif; letter-spacing: .2px; padding: 2px 0 0; }
table { width: 1898px; margin-left: 10px; border-collapse: collapse; font-size: 26px; letter-spacing: .1px; }
td { height: 70px; padding: 0 16px; border-top: 2px solid #dddddd; }
td:first-child { width: 582px; }
.caps { letter-spacing: -.4px; }
.id { letter-spacing: .25px; }
tr:nth-child(odd) { background: #f9f9f9; }
.scroll { width: 30px; flex: none; background: #fafafa; border-left: 2px solid #e6e6e8; padding: 6px 0 0 6px; }
.scroll i { width: 16px; height: 984px; border-radius: 8px; background: #c1c1c1; }

/* windows below the browser */
.under { flex: 1; display: flex; justify-content: space-between; }
.wood { width: 118px; background: linear-gradient(90deg, #2a2019 0 76px, #303440 80px); }
.editor { width: 118px; display: flex; flex-direction: column; justify-content: flex-end; background: #191919; }
.editor-bar { height: 14px; overflow: hidden; background: #007acc; color: #fff; font: 24px/44px Inter, sans-serif; padding-left: 12px; white-space: nowrap; }

/* select popup */
.popup { position: absolute; left: 520px; top: 606px; width: 1536px; height: 296px; padding: 8px 0; border-radius: 11px; background: #f0f0f0; box-shadow: 0 0 0 1px #b4b4b4, 0 14px 38px rgba(0,0,0,.32), 0 0 10px rgba(0,0,0,.12); font-size: 28px; letter-spacing: .19px; color: #3c3c3c; }
.popup li { height: 40px; line-height: 38px; padding-left: 42px; }
.popup .on { background: #4891f5; color: #fff; display: flex; padding-left: 10px; }
.popup .on svg { margin: 8px 12px 0 0; }

/* dock */
.dock { position: absolute; left: 118px; top: 1460px; width: 2324px; height: 140px; padding: 0 8px; display: flex; border-radius: 11px 11px 0 0; background: linear-gradient(90deg, rgba(95,112,145,.55), rgba(95,112,145,0) 400px), linear-gradient(#7d7d7f, #67727c 50%, #557086); box-shadow: 0 0 60px rgba(0,0,0,.16), 0 0 2px rgba(0,0,0,.5); }
.dock svg { width: 116px; height: 140px; }
.sep { width: 2px; height: 68px; margin: 36px 24px 0 26px; background: #3a4249; }
.sep.tall { height: 104px; margin-top: 18px; }
.badge circle { fill: #f6423f; }
.badge text { fill: #fff; font: 23px Inter, sans-serif; text-anchor: middle; }
```
